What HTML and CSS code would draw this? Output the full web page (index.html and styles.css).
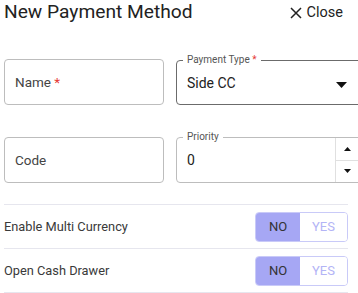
FILE: index.html
```html
<!DOCTYPE html>
<html>
<head>
<meta charset="utf-8">
<link rel="stylesheet" href="styles.css">
</head>
<body>
<div class="page">
  <div class="header">
    <div class="title">New Payment Method</div>
    <div class="close">
      <svg class="close-icon" width="12" height="12" viewBox="0 0 12 12"><path d="M1 1 L11 11 M11 1 L1 11" stroke="#222" stroke-width="1.5" fill="none"/></svg>
      <span>Close</span>
    </div>
  </div>
  <div class="form">
    <div class="field light">
      <span class="value placeholder">Name <span class="req">*</span></span>
    </div>
    <div class="field dark wide">
      <span class="legend">Payment Type <span class="req">*</span></span>
      <span class="value">Side CC</span>
      <svg class="caret" width="11" height="6" viewBox="0 0 11 6"><path d="M0 0 L11 0 L5.5 6 Z" fill="#111"/></svg>
    </div>
    <div class="field light">
      <span class="value placeholder">Code</span>
    </div>
    <div class="field light wide spinfield">
      <span class="legend">Priority</span>
      <span class="value">0</span>
      <div class="spinner">
        <div class="spin up"><svg width="7" height="4" viewBox="0 0 7 4"><path d="M0 4 L7 4 L3.5 0 Z" fill="#111"/></svg></div>
        <div class="spin down"><svg width="7" height="4" viewBox="0 0 7 4"><path d="M0 0 L7 0 L3.5 4 Z" fill="#111"/></svg></div>
      </div>
    </div>
  </div>
  <div class="rows">
    <div class="row">
      <span class="row-label">Enable Multi Currency</span>
      <div class="toggle"><span class="opt on">NO</span><span class="opt off">YES</span></div>
    </div>
    <div class="row">
      <span class="row-label">Open Cash Drawer</span>
      <div class="toggle"><span class="opt on">NO</span><span class="opt off">YES</span></div>
    </div>
  </div>
</div>
</body>
</html>
```
FILE: styles.css
```css
html, body { margin: 0; padding: 0; overflow: hidden; background: #fff; }
body { font-family: Roboto, "Liberation Sans", sans-serif; color: #222; }
.page { width: 344px; padding: 0 4px; }
.header { display: flex; justify-content: space-between; align-items: flex-start; height: 24px; }
.title { font-size: 19.2px; line-height: 24px; color: #222; }
.close { display: flex; align-items: center; gap: 5px; font-size: 14.5px; color: #222; padding-right: 5px; margin-top: 4px; }
.close-icon { display: block; }
.form { display: grid; grid-template-columns: 160px 200px; column-gap: 12px; row-gap: 32px; margin-top: 35px; }
.field { position: relative; box-sizing: border-box; height: 46px; border-radius: 4px; display: flex; align-items: center; padding-left: 10px; }
.field.light { border: 1px solid #bdbdbd; }
.field.dark { border: 1px solid #6b6b6b; margin-top: 1px; height: 45px; }
.field.wide .value { font-size: 14px; color: #222; }
.value { font-size: 13.5px; color: #444; }
.req { color: #e53935; }
.legend { position: absolute; top: -7px; left: 6px; padding: 0 4px; background: #fff; font-size: 10px; color: #555; line-height: 12px; }
.caret { position: absolute; left: 159px; top: 21px; }
.spinner { position: absolute; left: 158px; top: 0; bottom: 0; width: 30px; border-left: 1px solid #e0e0e0; display: flex; flex-direction: column; }
.spin { flex: 1; display: flex; align-items: center; padding-left: 8px; }
.spin.up { border-bottom: 1px solid #e0e0e0; }
.rows { margin-top: 21px; }
.row { display: flex; justify-content: space-between; align-items: center; height: 43px; border-top: 1px solid #e6e6ee; }
.row:last-child { border-bottom: 1px solid #e6e6ee; }
.row-label { font-size: 12.8px; color: #3a3a3a; }
.toggle { display: flex; height: 30px; box-sizing: border-box; border: 1px solid #c9caf8; border-radius: 4px; overflow: hidden; }
.opt { display: flex; align-items: center; justify-content: center; font-size: 13px; }
.opt.on { width: 44px; background: #a6a7f4; color: #333; }
.opt.off { width: 47px; color: #b3b4f6; background: #fff; }
```
